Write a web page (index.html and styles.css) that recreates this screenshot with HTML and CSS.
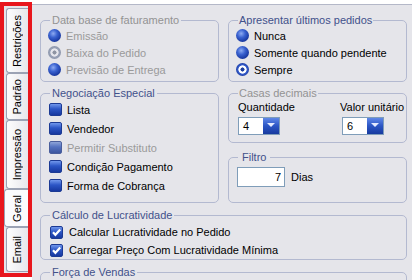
FILE: index.html
```html
<!DOCTYPE html>
<html>

<head>
    <meta charset="utf-8">
    <meta name="viewport" content="width=device-width, initial-scale=1">
    <title>Configurações</title>

    <link rel="stylesheet" href="styles.css">
</head>

<body>

    <div class="window">

        <div class="tabs">
            <div class="tab t_restricoes"><span>Restrições</span></div>
            <div class="tab t_padrao"><span>Padrão</span></div>
            <div class="tab t_impressao"><span>Impressão</span></div>
            <div class="tab t_geral selected"><span>Geral</span></div>
            <div class="tab t_email"><span>Email</span></div>
        </div>

        <div class="page">

            <div class="row row1">
                <fieldset class="group">
                    <legend class="off">Data base de faturamento</legend>
                    <div class="item radio_item off"><span class="radio"></span>Emissão</div>
                    <div class="item radio_item off"><span class="radio on_disabled"></span>Baixa do Pedido</div>
                    <div class="item radio_item off"><span class="radio"></span>Previsão de Entrega</div>
                </fieldset>

                <fieldset class="group">
                    <legend class="tight">Apresentar últimos pedidos</legend>
                    <div class="item radio_item"><span class="radio"></span>Nunca</div>
                    <div class="item radio_item"><span class="radio"></span>Somente quando pendente</div>
                    <div class="item radio_item"><span class="radio on"></span>Sempre</div>
                </fieldset>
            </div>

            <div class="row row2">
                <fieldset class="group">
                    <legend>Negociação Especial</legend>
                    <div class="item box_item"><span class="box"></span>Lista</div>
                    <div class="item box_item"><span class="box"></span>Vendedor</div>
                    <div class="item box_item off"><span class="box grey"></span>Permitir Substituto</div>
                    <div class="item box_item"><span class="box"></span>Condição Pagamento</div>
                    <div class="item box_item"><span class="box"></span>Forma de Cobrança</div>
                </fieldset>

                <div class="right_col">
                    <fieldset class="group casas">
                        <legend class="off tight">Casas decimais</legend>
                        <div class="decimais">
                            <div class="col">
                                <div class="label">Quantidade</div>
                                <div class="combo">
                                    <span class="combo_text">4</span>
                                    <span class="drop"></span>
                                </div>
                            </div>
                            <div class="col col_valor">
                                <div class="label">Valor unitário</div>
                                <div class="combo">
                                    <span class="combo_text">6</span>
                                    <span class="drop"></span>
                                </div>
                            </div>
                        </div>
                    </fieldset>

                    <fieldset class="group filtro">
                        <legend class="wide">Filtro</legend>
                        <div class="filtro_line">
                            <input class="num" type="text" value="7">
                            <span class="dias">Dias</span>
                        </div>
                    </fieldset>
                </div>
            </div>

            <fieldset class="group lucro">
                <legend>Cálculo de Lucratividade</legend>
                <div class="item check_item">
                    <span class="check"><svg width="13" height="13" viewBox="0 0 13 13"><path d="M3 6.2 L5.4 8.8 L10.2 3.6" stroke="#fff" stroke-width="2.2" fill="none"/></svg></span>
                    Calcular Lucratividade no Pedido
                </div>
                <div class="item check_item">
                    <span class="check"><svg width="13" height="13" viewBox="0 0 13 13"><path d="M3 6.2 L5.4 8.8 L10.2 3.6" stroke="#fff" stroke-width="2.2" fill="none"/></svg></span>
                    Carregar Preço Com Lucratividade Mínima
                </div>
            </fieldset>

            <fieldset class="group vendas">
                <legend>Força de Vendas</legend>
            </fieldset>

        </div>
    </div>

</body>

</html>
```

FILE: styles.css
```css
body {
    margin: 0;
    background: #ffffff;
    font-family: "Liberation Sans", Arial, sans-serif;
    font-size: 11px;
    color: #000000;
}

.window {
    display: flex;
    height: 280px;
    overflow: hidden;
}

/* side tabs, with the red frame round them */
.tabs {
    flex-shrink: 0;
    width: 32px;
    height: 275px;
    margin-top: 2px;
    box-sizing: border-box;
    border: 4px solid #e8161d;
    background: #e5e5ea;
    padding-top: 2px;
    display: flex;
    flex-direction: column;
}

.tab {
    flex-shrink: 0;
    width: 22px;
    margin-left: 2px;
    box-sizing: border-box;
    border: 1px solid #9ba2b4;
    border-right: none;
    border-radius: 3px 0 0 3px;
    background: linear-gradient(to right, #fdfdfd, #e6e6ec);
    display: flex;
    align-items: center;
    justify-content: center;
}

.tab span {
    writing-mode: vertical-rl;
    transform: rotate(180deg);
    line-height: 13px;
}

.t_restricoes { height: 65px; }
.t_padrao { height: 47px; }
.t_impressao { height: 69px; }
.t_geral { height: 38px; }
.t_email { height: 45px; }

.selected {
    width: 24px;
    margin-left: 0;
    padding-left: 2px;
    background: #fbfbfd;
}

/* tab page */
.page {
    flex: 1;
    margin-top: 4px;
    border-top: 1px solid #b4b8c8;
    background: #e5e5ea;
    padding: 9px 5px 0 8px;
    display: flex;
    flex-direction: column;
}

.page > * {
    flex-shrink: 0;
}

.row {
    display: grid;
    grid-template-columns: 179px 1fr;
    column-gap: 9px;
}

.row1 {
    height: 68px;
    margin-bottom: 5px;
}

.row2 {
    height: 116px;
    margin-bottom: 6px;
}

.group {
    margin: 0;
    padding: 0;
    min-width: 0;
    box-sizing: border-box;
    border: 1px solid #b3b9d0;
    border-radius: 5px;
}

legend {
    margin-left: 9px;
    padding: 0 2px;
    line-height: 13px;
    color: #42518a;
}

legend.tight {
    padding: 0 1px;
}

legend.wide {
    padding: 0 4px;
}

.off {
    color: #9a9a9a;
}

legend.off {
    color: #939393;
}

.item {
    display: flex;
    align-items: center;
}

.radio_item {
    height: 17px;
    padding-left: 7px;
    gap: 5px;
}

.box_item {
    height: 19px;
    padding-left: 8px;
    gap: 5px;
}

.check_item {
    height: 18px;
    padding-left: 9px;
    gap: 6px;
}

.radio {
    flex-shrink: 0;
    width: 13px;
    height: 13px;
    border-radius: 50%;
    background: radial-gradient(circle at 40% 35%, #8eabf2 0, #3a62d0 35%, #15349c 75%, #0b2270 100%);
}

.radio.on {
    background: radial-gradient(circle, #1d3e9e 0 1.8px, #ffffff 2.3px 3.8px, #3a62d0 4.4px, #15349c 75%, #0b2270 100%);
}

.radio.on_disabled {
    background: radial-gradient(circle, #8e94a2 0 1.8px, #e6e6ec 2.3px 3.8px, #9aa3b8 4.4px, #7d869c 100%);
}

.box,
.check {
    flex-shrink: 0;
    width: 13px;
    height: 13px;
    box-sizing: border-box;
    border: 1px solid #1c3a94;
    border-radius: 2px;
    background: linear-gradient(#7197ec, #2c56c6 45%, #17389f 100%);
}

.box.grey {
    border-color: #4a5e9c;
    background: linear-gradient(#8ea4d8, #5472c0 45%, #3d569e 100%);
}

.check svg {
    display: block;
    margin: -1px;
}

/* casas decimais */
.right_col {
    display: flex;
    flex-direction: column;
    gap: 8px;
}

.casas {
    height: 56px;
    flex-shrink: 0;
}

.decimais {
    display: flex;
    justify-content: space-between;
    padding: 1px 2px 0 9px;
}

.label {
    line-height: 13px;
}

.combo {
    display: flex;
    width: 42px;
    height: 18px;
    margin-top: 3px;
    box-sizing: border-box;
    border: 1px solid #7f9db9;
    background: #ffffff;
}

.col_valor .combo {
    margin-left: 2px;
}

.combo_text {
    flex: 1;
    padding-left: 4px;
    line-height: 16px;
}

.drop {
    width: 16px;
    height: 16px;
    background: linear-gradient(#5f87e8, #2b55c4 50%, #173a9f);
    display: flex;
    align-items: center;
    justify-content: center;
}

.drop::after {
    content: "";
    border-left: 4px solid transparent;
    border-right: 4px solid transparent;
    border-top: 4px solid #e4ebff;
    margin-top: -2px;
}

/* filtro */
.filtro {
    flex: 1;
}

.filtro_line {
    display: flex;
    align-items: center;
    padding: 3px 0 0 8px;
}

.num {
    width: 48px;
    height: 20px;
    box-sizing: border-box;
    margin: 0;
    border: 1px solid #7f9db9;
    padding: 0 3px 0 0;
    background: #ffffff;
    font-family: "Liberation Sans", Arial, sans-serif;
    font-size: 11px;
    text-align: right;
}

.dias {
    margin-left: 6px;
}

/* lucratividade */
.lucro {
    height: 51px;
    margin-bottom: 6px;
}

.lucro .check_item:first-of-type {
    margin-top: 1px;
}

.vendas {
    height: 40px;
}
```
